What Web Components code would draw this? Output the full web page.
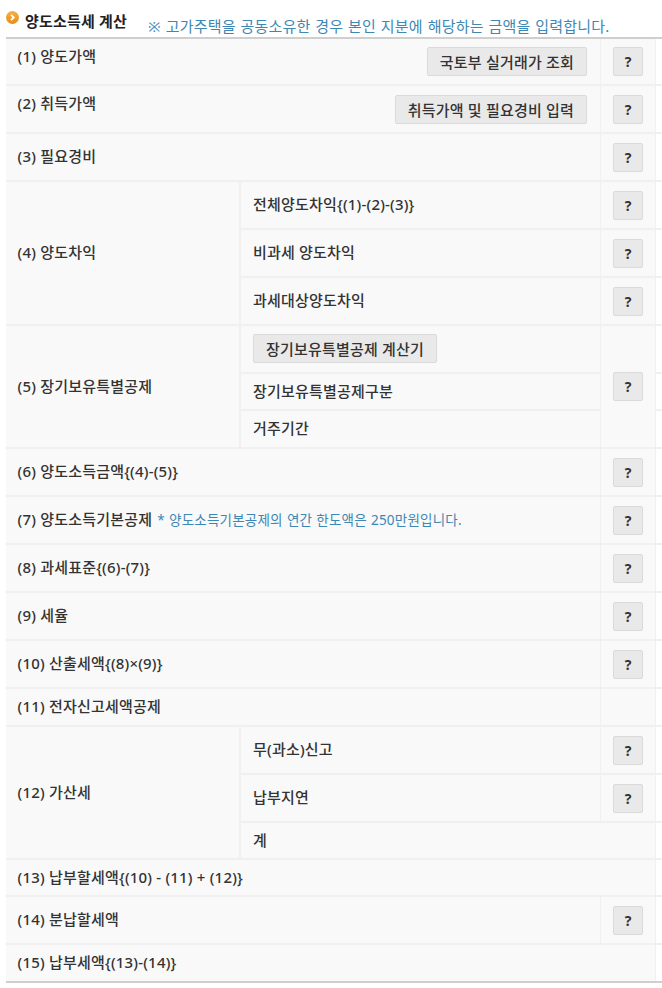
<!DOCTYPE html>
<html lang="ko">
<head>
<meta charset="utf-8">
<title>양도소득세 계산</title>
<style>
  html, body { margin: 0; background: #fff; }
  body { font-family: "Noto Sans", "Noto Sans CJK KR", sans-serif; color: #333; }
  calc-page { width: 662px; }
</style>
</head>
<body>
<script>
const line = "#f0f0f0";
const fontStack = `"Noto Sans", "Noto Sans CJK KR", sans-serif`;

class HelpButton extends HTMLElement {
  constructor() {
    super();
    this.attachShadow({mode: "open"}).innerHTML = `
    <style>
      :host { display: block; }
      button {
        display: block; box-sizing: border-box; width: 30px; height: 29px; padding: 0;
        background: #e9e9e9; border: 1px solid #dadada; border-radius: 2px;
        font: bold 14px ${fontStack}; color: #333;
      }
    </style>
    <button type="button">?</button>`;
  }
}
customElements.define("help-button", HelpButton);

class ActionButton extends HTMLElement {
  constructor() {
    super();
    this.attachShadow({mode: "open"}).innerHTML = `
    <style>
      :host { display: block; }
      button {
        display: block; box-sizing: border-box; height: 29px; padding: 0 12px;
        background: #e9e9e9; border: 1px solid #dadada; border-radius: 2px;
        font: 500 15px ${fontStack}; letter-spacing: .2px; color: #333; white-space: nowrap;
      }
    </style>
    <button type="button"><slot></slot></button>`;
  }
}
customElements.define("action-button", ActionButton);

class TaxRow extends HTMLElement {
  constructor() {
    super();
    this.attachShadow({mode: "open"}).innerHTML = `
    <style>
      :host {
        display: grid; grid-template-columns: 1fr 55px 7px; box-sizing: border-box;
        height: var(--h, 48px); border-bottom: 2px solid ${line};
        font-size: 15px; line-height: 20px; letter-spacing: .2px; font-weight: 500; color: #333;
      }
      .main { display: flex; align-items: center; justify-content: space-between; padding: 0 13px 0 var(--pad, 11.5px); background: #f9f9f9; min-width: 0; }
      .text { margin-bottom: 2px; white-space: nowrap; }
      :host([top]) .text { margin-bottom: 12px; }
      .help { display: flex; align-items: center; justify-content: center; background: #f9f9f9; border-left: 1px solid ${line}; }
      .tail { border-left: 1px solid ${line}; }
      :host([wide]) .main { grid-column: 1 / 3; }
      :host([wide]) .help { display: none; }
    </style>
    <div class="main"><span class="text"><slot></slot></span><slot name="action"></slot></div>
    <div class="help"><slot name="help"></slot></div>
    <div class="tail"></div>`;
  }
}
customElements.define("tax-row", TaxRow);

class TaxGroup extends HTMLElement {
  constructor() {
    super();
    this.attachShadow({mode: "open"}).innerHTML = `
    <style>
      :host { display: grid; grid-template-columns: 235px 1fr; font-size: 15px; line-height: 20px; letter-spacing: .2px; font-weight: 500; color: #333; --pad: 12px; }
      .label { display: flex; align-items: center; padding-left: 11.5px; background: #f9f9f9; border-right: 2px solid ${line}; border-bottom: 2px solid ${line}; }
      .label span { margin-bottom: 2px; }
      .rows { display: block; min-width: 0; }
    </style>
    <div class="label"><span><slot name="label"></slot></span></div>
    <div class="rows"><slot></slot></div>`;
  }
}
customElements.define("tax-group", TaxGroup);

// three lines of group (5) share one help cell
class TaxMerged extends HTMLElement {
  constructor() {
    super();
    this.attachShadow({mode: "open"}).innerHTML = `
    <style>
      :host { display: grid; grid-template-columns: 1fr 55px 7px; grid-template-rows: 48px 37px 38px; }
      ::slotted(tax-line) { grid-column: 1; }
      .help { grid-column: 2; grid-row: 1 / 4; display: flex; align-items: center; justify-content: center; background: #f9f9f9; border-left: 1px solid ${line}; border-bottom: 2px solid ${line}; }
      .tail { grid-column: 3; border-left: 1px solid ${line}; border-bottom: 2px solid ${line}; }
      .t1 { grid-row: 1; } .t2 { grid-row: 2; } .t3 { grid-row: 3; }
    </style>
    <slot></slot>
    <div class="help"><slot name="help"></slot></div>
    <div class="tail t1"></div><div class="tail t2"></div><div class="tail t3"></div>`;
  }
}
customElements.define("tax-merged", TaxMerged);

class TaxLine extends HTMLElement {
  constructor() {
    super();
    this.attachShadow({mode: "open"}).innerHTML = `
    <style>
      :host { display: flex; align-items: center; box-sizing: border-box; padding-left: 12px; background: #f9f9f9; border-bottom: 2px solid ${line}; }
      span { margin-bottom: 2px; }
    </style>
    <span><slot></slot></span>`;
  }
}
customElements.define("tax-line", TaxLine);

class SectionHead extends HTMLElement {
  constructor() {
    super();
    this.attachShadow({mode: "open"}).innerHTML = `
    <style>
      :host { display: block; height: 39px; box-sizing: border-box; padding-left: 6px; }
      .inner { display: flex; height: 39px; box-sizing: border-box; border-bottom: 2px solid #cfcfcf; }
      svg { margin-top: 11px; flex: none; }
      h2 { margin: 9px 0 0 5px; font-size: 15px; line-height: 24px; height: 24px; font-weight: 700; color: #222; letter-spacing: .2px; white-space: nowrap; }
      p { margin: 14px 0 0 21px; font-size: 15px; line-height: 24px; height: 24px; font-weight: 400; color: #3d87b4; letter-spacing: .2px; word-spacing: .7px; white-space: nowrap; }
    </style>
    <div class="inner">
      <svg width="14" height="14" viewBox="0 0 14 14">
        <defs>
          <linearGradient id="dot" x1="0" y1="0" x2="0" y2="1">
            <stop offset="0" stop-color="#f6b04a"/>
            <stop offset="1" stop-color="#e98a14"/>
          </linearGradient>
        </defs>
        <circle cx="6.5" cy="6.5" r="6.5" fill="url(#dot)"/>
        <path d="M5 3.8 7.8 6.5 5 9.2" fill="none" stroke="#fff" stroke-width="1.8"/>
      </svg>
      <h2><slot name="title"></slot></h2>
      <p><slot name="note"></slot></p>
    </div>`;
  }
}
customElements.define("section-head", SectionHead);

class CalcPage extends HTMLElement {
  constructor() {
    super();
    this.attachShadow({mode: "open"}).innerHTML = `
    <style>
      :host { display: block; }
      .body { margin-left: 6px; }
      ::slotted(:last-child) { border-bottom-color: #cfcfcf; }
    </style>
    <slot name="head"></slot>
    <div class="body"><slot></slot></div>`;
  }
}
customElements.define("calc-page", CalcPage);
</script>

<style>
  .note { color: #3d87b4; font-size: 13.5px; font-weight: 400; letter-spacing: .2px; word-spacing: .5px; margin-left: 1px; }
</style>

<calc-page>
  <section-head slot="head">
    <span slot="title">양도소득세 계산</span>
    <span slot="note">※ 고가주택을 공동소유한 경우 본인 지분에 해당하는 금액을 입력합니다.</span>
  </section-head>

  <tax-row top style="--h:47px">(1) 양도가액
    <action-button slot="action">국토부 실거래가 조회</action-button>
    <help-button slot="help"></help-button>
  </tax-row>
  <tax-row top>(2) 취득가액
    <action-button slot="action">취득가액 및 필요경비 입력</action-button>
    <help-button slot="help"></help-button>
  </tax-row>
  <tax-row>(3) 필요경비<help-button slot="help"></help-button></tax-row>

  <tax-group>
    <span slot="label">(4) 양도차익</span>
    <tax-row>전체양도차익{(1)-(2)-(3)}<help-button slot="help"></help-button></tax-row>
    <tax-row>비과세 양도차익<help-button slot="help"></help-button></tax-row>
    <tax-row>과세대상양도차익<help-button slot="help"></help-button></tax-row>
  </tax-group>

  <tax-group>
    <span slot="label">(5) 장기보유특별공제</span>
    <tax-merged>
      <tax-line><action-button>장기보유특별공제 계산기</action-button></tax-line>
      <tax-line>장기보유특별공제구분</tax-line>
      <tax-line>거주기간</tax-line>
      <help-button slot="help"></help-button>
    </tax-merged>
  </tax-group>

  <tax-row>(6) 양도소득금액{(4)-(5)}<help-button slot="help"></help-button></tax-row>
  <tax-row>(7) 양도소득기본공제 <span class="note">* 양도소득기본공제의 연간 한도액은 250만원입니다.</span><help-button slot="help"></help-button></tax-row>
  <tax-row>(8) 과세표준{(6)-(7)}<help-button slot="help"></help-button></tax-row>
  <tax-row>(9) 세율<help-button slot="help"></help-button></tax-row>
  <tax-row>(10) 산출세액{(8)×(9)}<help-button slot="help"></help-button></tax-row>
  <tax-row style="--h:38px">(11) 전자신고세액공제</tax-row>

  <tax-group>
    <span slot="label">(12) 가산세</span>
    <tax-row>무(과소)신고<help-button slot="help"></help-button></tax-row>
    <tax-row>납부지연<help-button slot="help"></help-button></tax-row>
    <tax-row wide style="--h:37px">계</tax-row>
  </tax-group>

  <tax-row wide style="--h:37px">(13) 납부할세액{(10) - (11) + (12)}</tax-row>
  <tax-row>(14) 분납할세액<help-button slot="help"></help-button></tax-row>
  <tax-row wide style="--h:38px">(15) 납부세액{(13)-(14)}</tax-row>
</calc-page>
</body>
</html>
